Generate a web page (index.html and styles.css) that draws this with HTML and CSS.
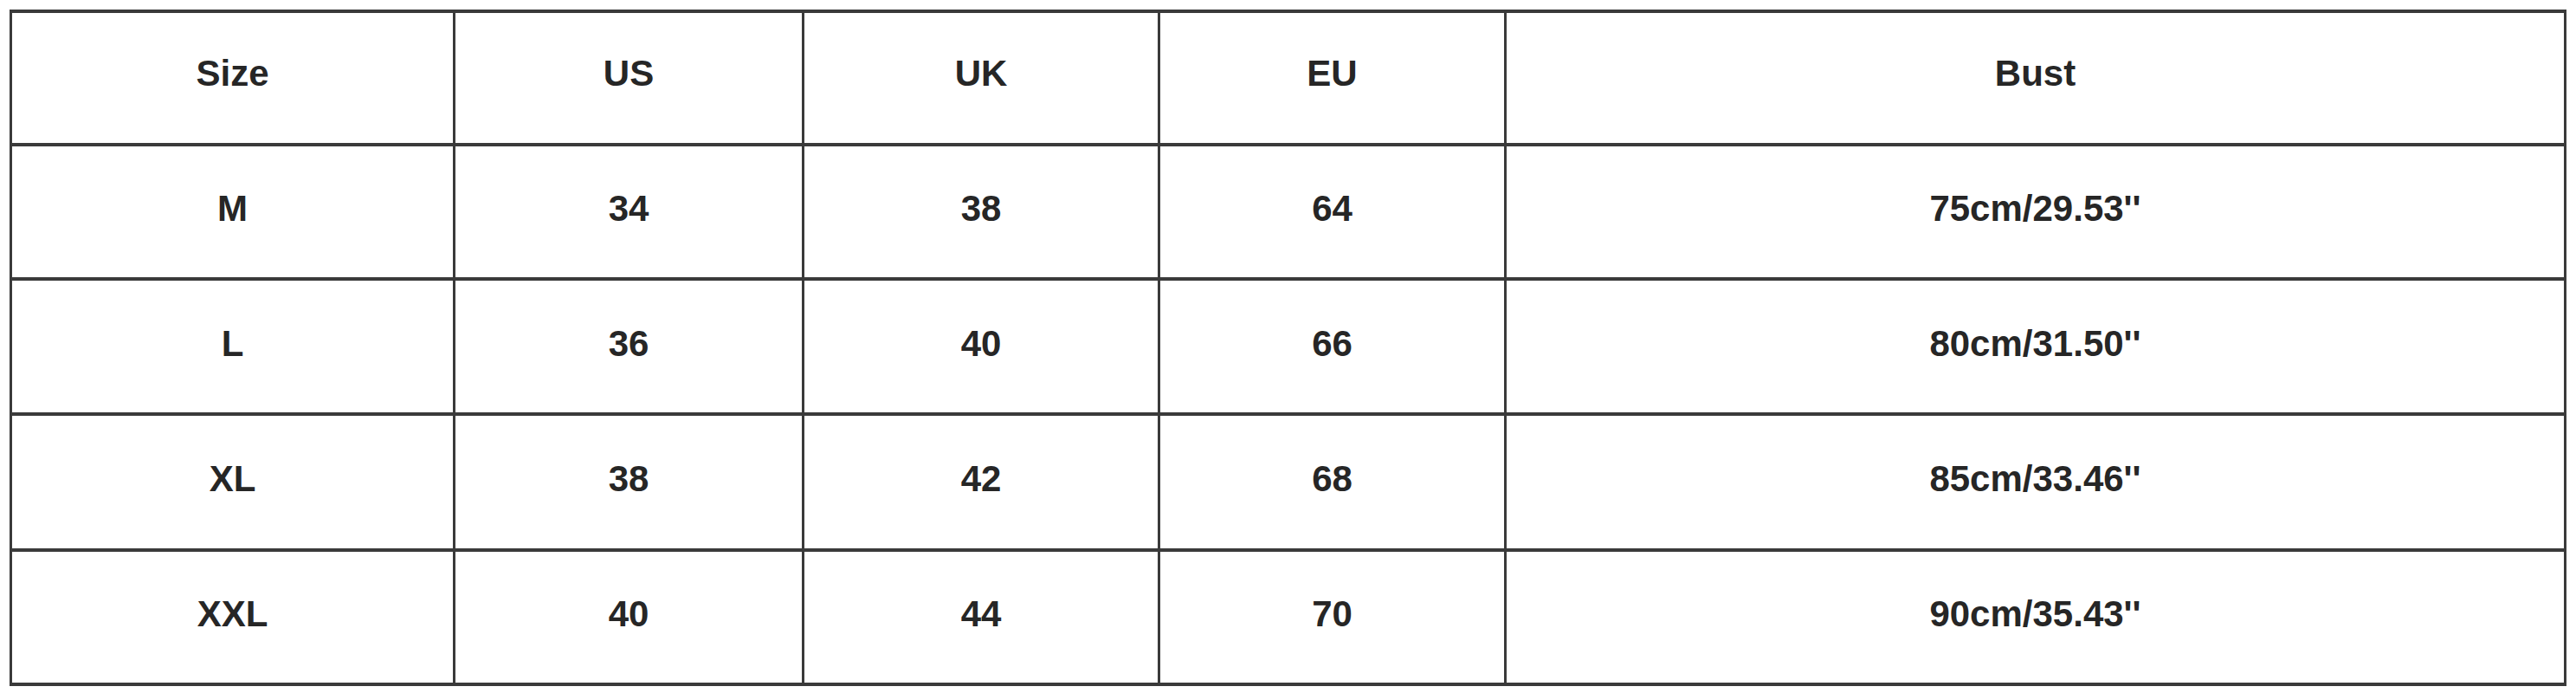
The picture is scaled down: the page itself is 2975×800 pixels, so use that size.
FILE: index.html
```html
<!DOCTYPE html>
<html>
<head>
<meta charset="utf-8">
<link rel="stylesheet" href="styles.css">
</head>
<body>
<div class="chart">
  <div class="cell head">Size</div>
  <div class="cell head">US</div>
  <div class="cell head">UK</div>
  <div class="cell head">EU</div>
  <div class="cell head">Bust</div>

  <div class="cell">M</div>
  <div class="cell">34</div>
  <div class="cell">38</div>
  <div class="cell">64</div>
  <div class="cell">75cm/29.53''</div>

  <div class="cell">L</div>
  <div class="cell">36</div>
  <div class="cell">40</div>
  <div class="cell">66</div>
  <div class="cell">80cm/31.50''</div>

  <div class="cell">XL</div>
  <div class="cell">38</div>
  <div class="cell">42</div>
  <div class="cell">68</div>
  <div class="cell">85cm/33.46''</div>

  <div class="cell">XXL</div>
  <div class="cell">40</div>
  <div class="cell">44</div>
  <div class="cell">70</div>
  <div class="cell">90cm/35.43''</div>
</div>
</body>
</html>
```
FILE: styles.css
```css
html, body {
  margin: 0;
  padding: 0;
  background: #ffffff;
}

body {
  padding: 11px 0 0 11px;
  font-family: "Liberation Sans", Arial, sans-serif;
}

.chart {
  display: grid;
  width: 2953px;
  box-sizing: border-box;
  grid-template-columns: 509px 400px 408px 397px 1221px;
  grid-template-rows: 150px 151px 152px 153px 151px;
  column-gap: 3px;
  row-gap: 4px;
  padding: 4px 3px;
  background: #3a3a3a;
}

.cell {
  background: #ffffff;
  display: flex;
  align-items: center;
  justify-content: center;
  font-size: 42px;
  font-weight: bold;
  color: #262626;
  padding-bottom: 7px;
  box-sizing: border-box;
}

.cell.head {
  padding-bottom: 10px;
}
```
